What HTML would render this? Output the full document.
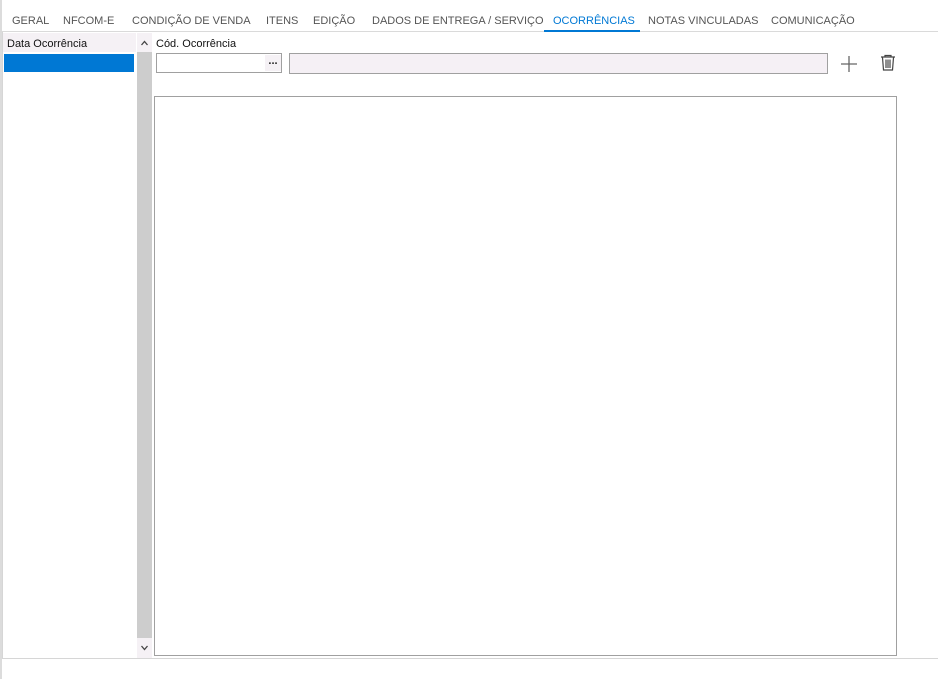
<!DOCTYPE html>
<html><head><style>
body{margin:0;width:938px;height:679px;background:#fff;position:relative;overflow:hidden;font-family:"Liberation Sans",sans-serif;font-size:11px;color:#222}
.a{position:absolute}
.tab{position:absolute;top:15px;color:#555;font-size:11px;white-space:nowrap}
</style></head><body>
<div class="a" style="left:0;top:0;width:2px;height:679px;background:#dcdcdc"></div>
<div class="a" style="left:0;top:31px;width:938px;height:1px;background:#dadada"></div>
<span class="tab" style="left:12px">GERAL</span>
<span class="tab" style="left:63px">NFCOM-E</span>
<span class="tab" style="left:132px">CONDIÇÃO DE VENDA</span>
<span class="tab" style="left:266px">ITENS</span>
<span class="tab" style="left:313px">EDIÇÃO</span>
<span class="tab" style="left:372px">DADOS DE ENTREGA / SERVIÇO</span>
<span class="tab" style="left:553px;color:#0078d4">OCORRÊNCIAS</span>
<div class="a" style="left:544px;top:30px;width:96px;height:2px;background:#0078d4"></div>
<span class="tab" style="left:648px">NOTAS VINCULADAS</span>
<span class="tab" style="left:771px">COMUNICAÇÃO</span>
<div class="a" style="left:2px;top:32px;width:1px;height:627px;background:#d6d6d6"></div>
<div class="a" style="left:2px;top:658px;width:936px;height:1px;background:#d6d6d6"></div>
<div class="a" style="left:3px;top:33px;width:133px;height:19px;background:#f5f1f5"></div>
<div class="a" style="left:7px;top:38px;color:#111">Data Ocorrência</div>
<div class="a" style="left:4px;top:54px;width:130px;height:18px;background:#0078d4"></div>
<div class="a" style="left:137px;top:33px;width:15px;height:625px;background:#cdcdcd"></div>
<svg class="a" style="left:137px;top:33px;background:#f5f1f5" width="15" height="19"><path d="M4.5 12L7.5 8.5L10.5 12" stroke="#444" stroke-width="1.3" fill="none"/></svg>
<svg class="a" style="left:137px;top:638px;background:#f5f1f5" width="15" height="20"><path d="M4.5 8L7.5 11.5L10.5 8" stroke="#444" stroke-width="1.3" fill="none"/></svg>
<div class="a" style="left:156px;top:38px;color:#111">Cód. Ocorrência</div>
<div class="a" style="left:156px;top:53px;width:126px;height:20px;border:1px solid #a0a0a0;box-sizing:border-box"></div>
<div class="a" style="left:265px;top:55px;width:16px;height:16px;background:#f5f1f5;font-weight:bold;font-size:11px;text-align:center;line-height:12px">...</div>
<div class="a" style="left:289px;top:53px;width:539px;height:21px;border:1px solid #a0a0a0;box-sizing:border-box;background:#f5f0f5"></div>
<svg class="a" style="left:840px;top:55px" width="18" height="18"><path d="M9 1V17M1 9H17" stroke="#666" stroke-width="1.3"/></svg>
<svg class="a" style="left:879px;top:54px" width="18" height="18"><path d="M2 3H16M6 3V1.5H12V3M3.5 3.5L4.5 16H13.5L14.5 3.5M7 5.5V14M9 5.5V14M11 5.5V14" stroke="#444" stroke-width="1.2" fill="none"/></svg>
<div class="a" style="left:154px;top:96px;width:743px;height:560px;border:1px solid #a0a0a0;box-sizing:border-box"></div>
</body></html>
